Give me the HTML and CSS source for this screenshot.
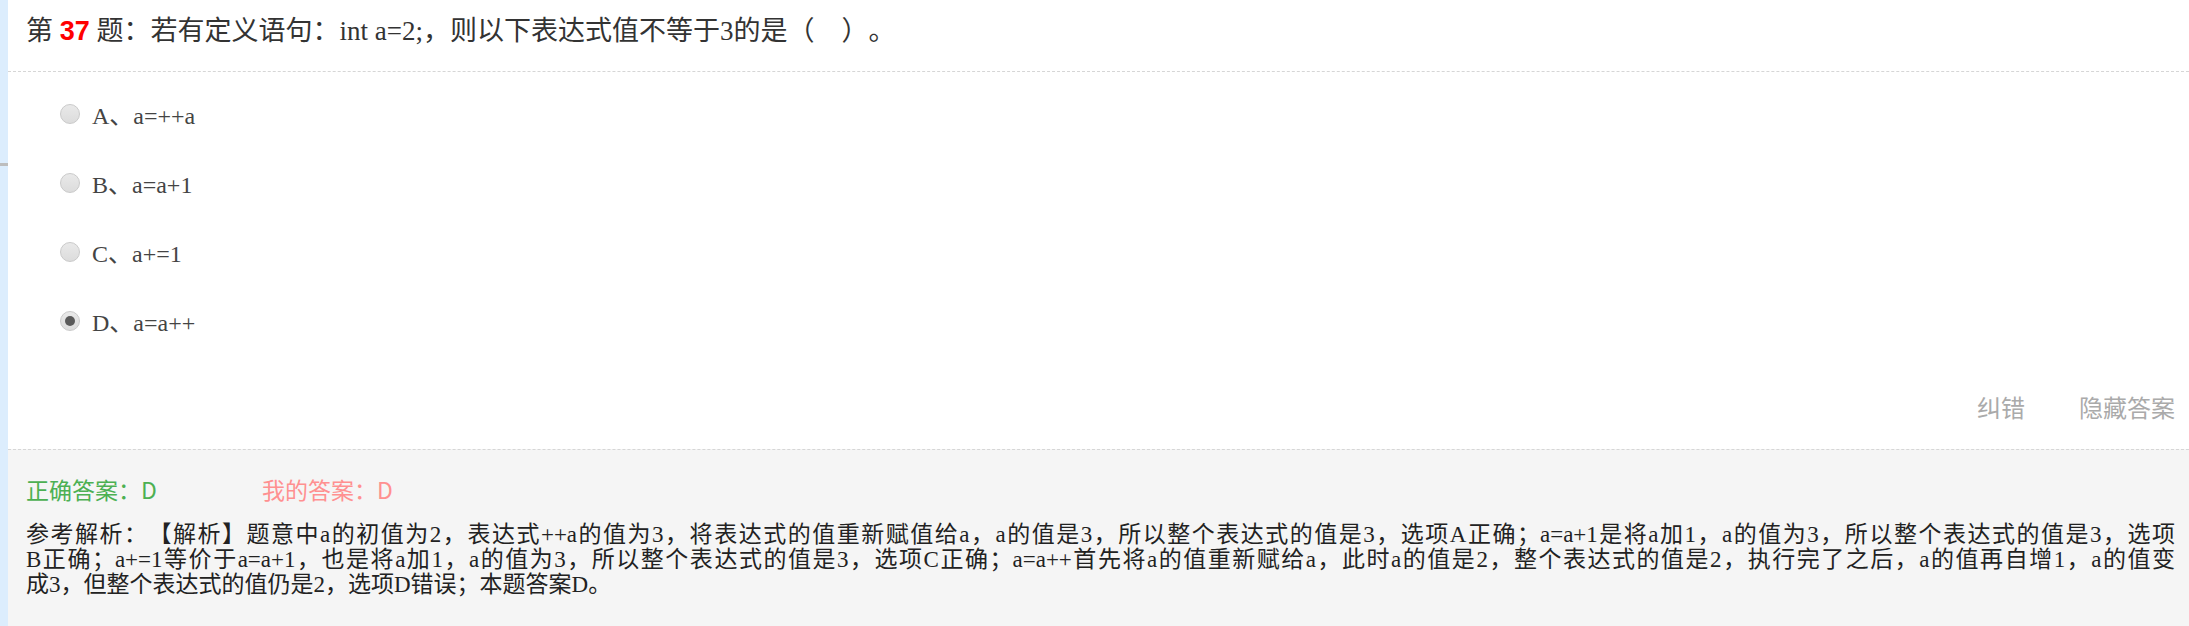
FILE: index.html
```html
<!DOCTYPE html>
<html>
<head>
	<meta charset="utf-8">
	<title>第37题</title>
	<link rel="stylesheet" href="styles.css">
</head>
<body>

	<div class="page">
		<div class="rail"><span class="rail-mark"></span></div>

		<div class="question">
			<div class="q-title">第 <b class="q-no">37</b> 题：若有定义语句：int a=2;，则以下表达式值不等于3的是（　）。</div>

			<ul class="options">
				<li><span class="radio"></span>A、a=++a</li>
				<li><span class="radio"></span>B、a=a+1</li>
				<li><span class="radio"></span>C、a+=1</li>
				<li><span class="radio checked"></span>D、a=a++</li>
			</ul>

			<div class="actions">
				<a href="#">纠错</a>
				<a href="#">隐藏答案</a>
			</div>

			<div class="answer">
				<div class="answer-line">
					<span class="right">正确答案：D</span>
					<span class="mine">我的答案：D</span>
				</div>
				<p class="analysis">
					<span class="row">参考解析：【解析】题意中a的初值为2，表达式++a的值为3，将表达式的值重新赋值给a，a的值是3，所以整个表达式的值是3，选项A正确；a=a+1是将a加1，a的值为3，所以整个表达式的值是3，选项</span>
					<span class="row">B正确；a+=1等价于a=a+1，也是将a加1，a的值为3，所以整个表达式的值是3，选项C正确；a=a++首先将a的值重新赋给a，此时a的值是2，整个表达式的值是2，执行完了之后，a的值再自增1，a的值变</span>
					<span class="row last">成3，但整个表达式的值仍是2，选项D错误；本题答案D。</span>
				</p>
			</div>
		</div>
	</div>

</body>
</html>
```

FILE: styles.css
```css
html, body {margin:0;padding:0;background:#fff;}
body {font-family:"Liberation Serif", "Noto Sans CJK SC", serif;color:#333;text-spacing-trim:space-all;}

.page {display:flex;min-height:626px;}
.rail {width:8px;flex:none;background:#dcedfd;}
.rail-mark {display:block;height:3px;margin-top:163px;background:#bdbdbd;}

.question {flex:1;display:flex;flex-direction:column;}

.q-title {font-size:27px;line-height:36px;padding:13px 18px 22px;border-bottom:1px dashed #d6d6d6;}
.q-no {font-family:"Liberation Sans", sans-serif;color:#f00;font-weight:bold;}

.options {list-style:none;margin:0;padding:7px 0 0 52px;}
.options li {display:flex;align-items:center;height:69px;font-size:24px;color:#444;}
.radio {width:18px;height:18px;border:1px solid #cacaca;border-radius:50%;background:linear-gradient(#e9e9e9, #dcdcdc);margin-right:12px;display:flex;align-items:center;justify-content:center;}
.radio.checked:after {content:"";width:10px;height:10px;border-radius:50%;background:#5a5a5a;}

.actions {display:flex;justify-content:flex-end;gap:54px;padding:34px 14px 25px;font-family:"Noto Sans CJK SC", sans-serif;font-size:24px;}
.actions a {color:#aaa;text-decoration:none;}

.answer {flex:1;background:#f5f5f5;border-top:1px dashed #d6d6d6;padding:24px 14px 20px 18px;}
.answer-line {font-family:"Noto Sans CJK SC", sans-serif;font-size:23px;line-height:30px;}
.answer-line .right {color:#4cb052;}
.answer-line .mine {color:#ff9090;margin-left:100px;}
.analysis {margin:18px 0 0;font-size:23px;line-height:25px;color:#222;}
.analysis .row {display:block;text-align:justify;text-align-last:justify;}
.analysis .row.last {text-align-last:auto;}
```
